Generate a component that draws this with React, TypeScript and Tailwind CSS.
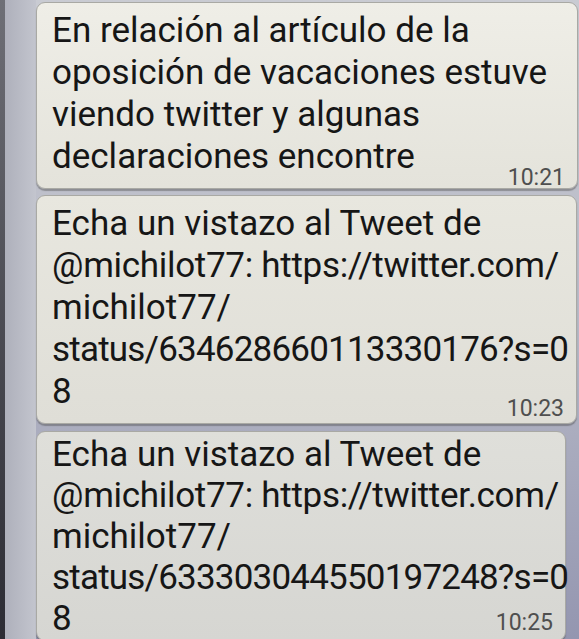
const MESSAGES = [
  {
    lines: [
      "En relación al artículo de la",
      "oposición de vacaciones estuve",
      "viendo twitter y algunas",
      "declaraciones encontre",
    ],
    time: "10:21",
    bg: "bg-gradient-to-b from-[#efeee7] to-[#e4e3db]",
    box: "mt-[2px] mr-[1px] pt-[7px] pb-[10px] leading-[42px]",
    timeBox: "mb-[-11px]",
  },
  {
    lines: [
      "Echa un vistazo al Tweet de",
      "@michilot77: https://twitter.com/",
      "michilot77/",
      "status/634628660113330176?s=0",
      "8",
    ],
    time: "10:23",
    bg: "bg-gradient-to-b from-[#e8e7df] to-[#dfded7]",
    box: "mt-[6px] mr-[2px] pt-[7px] pb-[10px] leading-[42px]",
    timeBox: "mb-[-7px]",
  },
  {
    lines: [
      "Echa un vistazo al Tweet de",
      "@michilot77: https://twitter.com/",
      "michilot77/",
      "status/633303044550197248?s=0",
      "8",
    ],
    time: "10:25",
    bg: "bg-gradient-to-b from-[#dfdfda] to-[#d6d6d2]",
    box: "mt-[7px] mr-[13px] pt-[2px] pb-[1px] leading-[41px]",
    timeBox: "mb-[5px]",
  },
];

function Bubble({ lines, time, bg, box, timeBox }: (typeof MESSAGES)[number]) {
  const last = lines[lines.length - 1];
  return (
    <div
      className={`${box} ${bg} rounded-[9px] border border-[#a9a9a4] shadow-[0_2px_1px_rgba(80,80,80,0.45)] pl-[15px] pr-[12px] text-[35px] text-[#161616]`}
    >
      {lines.slice(0, -1).map((l, i) => (
        <div
          key={i}
          className={`whitespace-nowrap ${l.startsWith("status/") ? "tracking-[-0.8px]" : l.startsWith("@") ? "tracking-[-0.3px]" : ""}`}
        >
          {l}
        </div>
      ))}
      <div className="flex items-end">
        <span className="min-w-0 whitespace-nowrap">{last}</span>
        <span className={`ml-auto shrink-0 text-[23px] leading-[22px] text-[#4f4f4f] ${timeBox}`}>{time}</span>
      </div>
    </div>
  );
}

export default function App() {
  return (
    <div
      className="w-[579px] h-[639px] overflow-hidden flex bg-gradient-to-b from-[#c9cbd2] via-[#b7b9c6] to-[#9496b0]"
      style={{ fontFamily: "Roboto, 'Noto Sans', sans-serif" }}
    >
      <div className="w-[5px] shrink-0 bg-gradient-to-b from-[#6e6f76] to-[#2c2c34]" />
      <div className="w-[31px] shrink-0 bg-gradient-to-r from-[#aeb0bb] to-[#c3c5ce]" />
      <div className="flex-1 min-w-0 flex flex-col">
        {MESSAGES.map((m) => (
          <Bubble key={m.time} {...m} />
        ))}
      </div>
    </div>
  );
}
